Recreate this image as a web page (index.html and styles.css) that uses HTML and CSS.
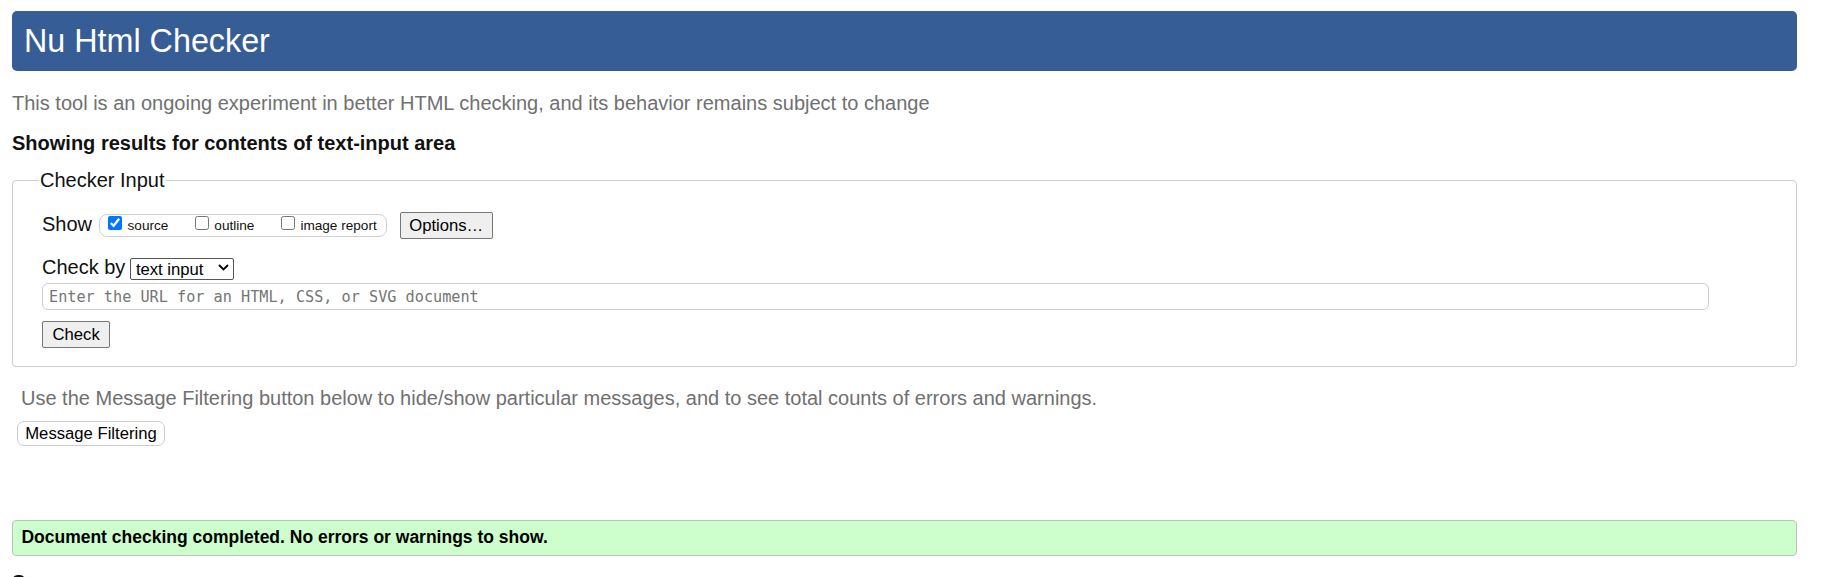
FILE: index.html
```html
<!DOCTYPE html>
<html lang="en">
<head>
<meta charset="utf-8">
<title>Nu Html Checker</title>
<link rel="stylesheet" href="styles.css">
</head>
<body>
<h1 class="title">Nu Html Checker</h1>
<p class="intro">This tool is an ongoing experiment in better HTML checking, and its behavior remains subject to change</p>
<h2 class="results-head">Showing results for contents of text-input area</h2>
<form class="checker-form">
  <fieldset class="checker">
    <legend class="checker-legend">Checker Input</legend>
    <div class="show-row">
      <span class="row-label">Show</span>
      <span class="show-group">
        <label class="opt"><input type="checkbox" checked><span>source</span></label>
        <label class="opt"><input type="checkbox"><span>outline</span></label>
        <label class="opt"><input type="checkbox"><span>image report</span></label>
      </span>
      <button type="button" class="btn options-btn">Options…</button>
    </div>
    <div class="check-row">
      <label class="row-label" for="docselect">Check by</label>
      <span class="select-wrap">
        <select id="docselect" class="select"><option>text input</option></select>
        <svg class="chev" viewBox="0 0 11 7" aria-hidden="true"><path d="M1 1 L5.5 5.5 L10 1" fill="none" stroke="#000" stroke-width="1.8"/></svg>
      </span>
    </div>
    <input class="url-input" type="url" placeholder="Enter the URL for an HTML, CSS, or SVG document">
    <div class="submit-row"><button type="button" class="btn check-btn">Check</button></div>
  </fieldset>
</form>
<p class="filter-note">Use the Message Filtering button below to hide/show particular messages, and to see total counts of errors and warnings.</p>
<div class="filter-row"><button type="button" class="filter-btn">Message Filtering</button></div>
<div class="success">Document checking completed. No errors or warnings to show.</div>
<h2 class="source-head">Source</h2>
</body>
</html>
```

FILE: styles.css
```css
* { box-sizing: border-box; }

html, body {
  margin: 0;
  background: #fff;
}

body {
  padding: 0 25px 0 12px;
  font-family: "Liberation Sans", Arial, sans-serif;
  color: #111;
}

.title {
  margin: 11px 0 0;
  padding: 12px 12px;
  background: #365d96;
  color: #fff;
  font-size: 32.3px;
  font-weight: normal;
  line-height: 36px;
  border-radius: 5px;
}

.intro {
  margin: 21px 0 0;
  font-size: 20px;
  line-height: 23px;
  color: #707070;
}

.results-head {
  margin: 17px 0 0;
  font-size: 20px;
  line-height: 23px;
  font-weight: bold;
  color: #111;
}

.checker-form { margin: 0; }

.checker {
  margin: 14px 0 0;
  padding: 0 29px 18px;
  border: 1px solid #cccccc;
  border-radius: 4px;
  min-width: 0;
}

.checker-legend {
  padding: 0 1px;
  margin-left: -3px;
  font-size: 20px;
  line-height: 23px;
  color: #111;
}

.row-label {
  font-size: 20px;
  line-height: 23px;
  color: #111;
}

.show-row {
  display: flex;
  align-items: flex-start;
  margin-top: 20px;
  height: 27px;
}

.show-row .row-label {
  margin-top: 1px;
  margin-right: 7px;
}

.show-group {
  display: flex;
  align-items: flex-start;
  gap: 26.5px;
  height: 23px;
  margin-top: 2px;
  padding: 0 9px 0 8px;
  border: 1px solid #d0d0d0;
  border-radius: 8px;
}

.opt {
  display: flex;
  align-items: flex-start;
  gap: 5.5px;
  font-size: 13.6px;
  line-height: 15px;
  color: #111;
}

.opt input {
  width: 14px;
  height: 14px;
  margin: 1px 0 0;
}

.opt span { margin-top: 3px; }

.btn {
  font-family: inherit;
  font-size: 16.67px;
  line-height: 19px;
  height: 27px;
  padding: 3px 8.5px;
  border: 1px solid #767676;
  border-radius: 2px;
  background: #efefef;
  color: #000;
}

.options-btn { margin-left: 13px; }

.check-row {
  display: flex;
  align-items: flex-start;
  gap: 5px;
  margin-top: 17px;
}

.select-wrap {
  position: relative;
  display: flex;
  align-items: center;
  width: 104px;
  height: 22px;
  margin-top: 2px;
  border: 1px solid #555;
  border-radius: 2px;
  background: #fff;
}

.select {
  appearance: none;
  -webkit-appearance: none;
  width: 100%;
  height: 20px;
  padding: 0 0 0 4.5px;
  border: 0;
  background: transparent;
  font-family: inherit;
  font-size: 16.67px;
  line-height: 19px;
  color: #000;
  outline: none;
}

.chev {
  position: absolute;
  right: 4px;
  top: 5px;
  width: 11px;
  height: 7px;
  pointer-events: none;
}

.url-input {
  display: block;
  width: calc(100% - 58px);
  height: 27px;
  margin: 3px 0 0;
  padding: 0 6px;
  border: 1px solid #cccccc;
  border-radius: 6px;
  background: #fff;
  font-family: "DejaVu Sans Mono", monospace;
  font-size: 15.2px;
  color: #000;
}

.url-input::placeholder { color: #757575; }

.submit-row { margin-top: 11px; }

.check-btn { padding: 3px 9.5px; }

.filter-note {
  margin: 20px 0 0 9px;
  font-size: 20px;
  line-height: 23px;
  color: #707070;
}

.filter-row {
  margin-top: 11px;
  padding-left: 5px;
}

.filter-btn {
  font-family: inherit;
  font-size: 16.67px;
  line-height: 19px;
  height: 24.5px;
  padding: 1px 7.25px;
  border: 1px solid #cccccc;
  border-radius: 7px;
  background: #fff;
  color: #000;
}

.success {
  margin-top: 74px;
  height: 36px;
  padding: 6px 8.4px 0;
  border: 1px solid #c0c0c0;
  border-radius: 4px;
  background: #ccffcc;
  font-size: 17.5px;
  line-height: 20px;
  font-weight: bold;
  color: #000;
}

.source-head {
  margin: 15px 0 0;
  font-size: 20px;
  line-height: 23px;
  font-weight: bold;
  color: #111;
}
```
